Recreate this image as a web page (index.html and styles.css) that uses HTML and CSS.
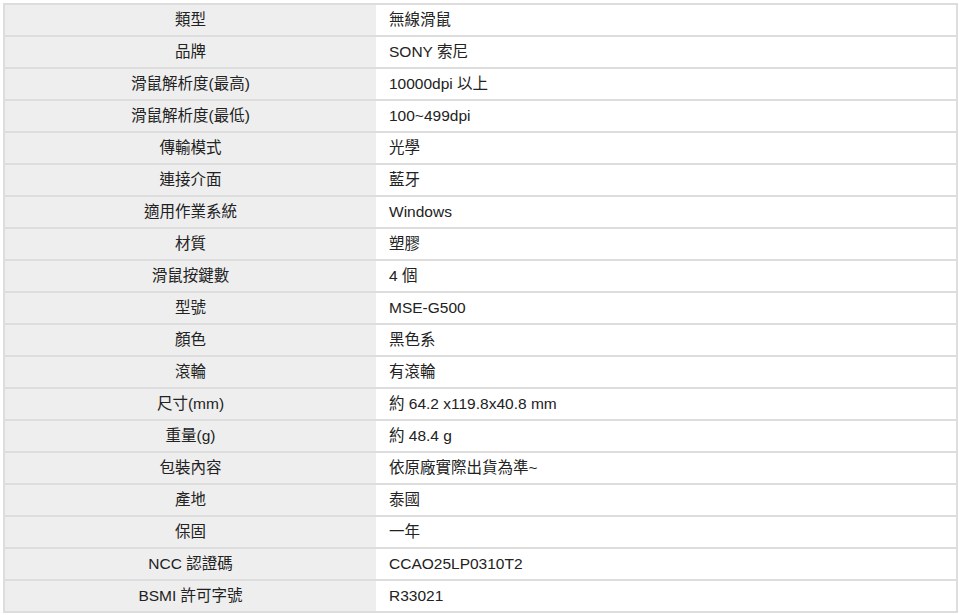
FILE: index.html
```html
<!DOCTYPE html>
<html lang="zh-Hant">
<head>
<meta charset="utf-8">
<link rel="stylesheet" href="styles.css">
</head>
<body>
<table class="spec">
<tbody>
<tr><th>類型</th><td>無線滑鼠</td></tr>
<tr><th>品牌</th><td>SONY 索尼</td></tr>
<tr><th>滑鼠解析度(最高)</th><td>10000dpi 以上</td></tr>
<tr><th>滑鼠解析度(最低)</th><td>100~499dpi</td></tr>
<tr><th>傳輸模式</th><td>光學</td></tr>
<tr><th>連接介面</th><td>藍牙</td></tr>
<tr><th>適用作業系統</th><td>Windows</td></tr>
<tr><th>材質</th><td>塑膠</td></tr>
<tr><th>滑鼠按鍵數</th><td>4 個</td></tr>
<tr><th>型號</th><td>MSE-G500</td></tr>
<tr><th>顏色</th><td>黑色系</td></tr>
<tr><th>滾輪</th><td>有滾輪</td></tr>
<tr><th>尺寸(mm)</th><td>約 64.2 x119.8x40.8 mm</td></tr>
<tr><th>重量(g)</th><td>約 48.4 g</td></tr>
<tr><th>包裝內容</th><td>依原廠實際出貨為準~</td></tr>
<tr><th>產地</th><td>泰國</td></tr>
<tr><th>保固</th><td>一年</td></tr>
<tr><th>NCC 認證碼</th><td>CCAO25LP0310T2</td></tr>
<tr><th>BSMI 許可字號</th><td>R33021</td></tr>
</tbody>
</table>
</body>
</html>
```
FILE: styles.css
```css
html, body {
  margin: 0;
  padding: 0;
  background: #ffffff;
}
body {
  padding: 3px;
  font-family: "Liberation Sans", Arial, "Noto Sans CJK TC", sans-serif;
  font-size: 15.5px;
  color: #222222;
}
.spec {
  width: 955px;
  border-collapse: collapse;
  border: 2px solid #dddddd;
}
.spec th,
.spec td {
  height: 30px;
  padding: 0;
  border-top: 2px solid #dddddd;
  border-bottom: 2px solid #dddddd;
  vertical-align: middle;
  line-height: 18px;
}
.spec th {
  width: 371px;
  background: #eeeeee;
  font-weight: normal;
  text-align: center;
}
.spec td {
  background: #ffffff;
  text-align: left;
  padding-left: 13px;
}
```
